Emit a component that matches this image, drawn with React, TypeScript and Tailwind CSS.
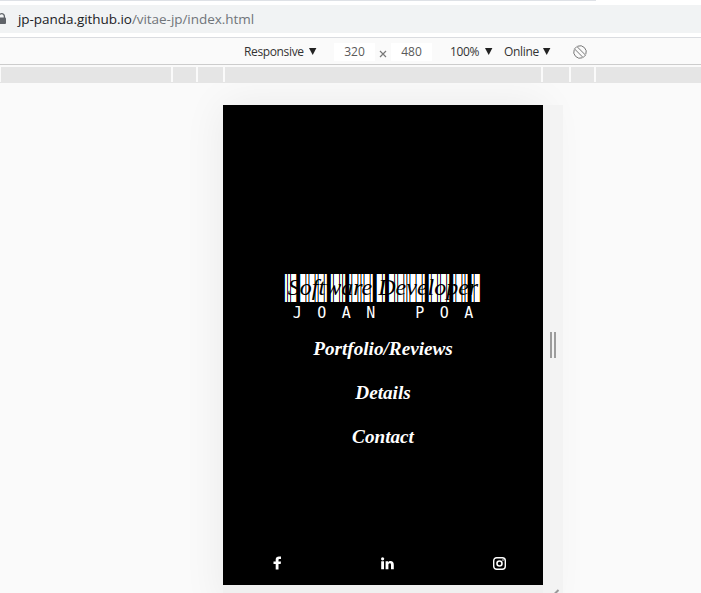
import React from "react";

const SEGMENTS = ["w-[170px]", "w-[23px]", "w-[25px]", "w-[316px]", "w-[26px]", "w-[23px]", "w-[110px]"];

// Code 39: nine alternating bars and spaces per character, n = narrow, w = wide.
const CODE39: Record<string, string> = {
  J: "nnnnwwwnn",
  O: "wnnnwnnwn",
  A: "wnnnnwnnw",
  N: "nnnnwnnww",
  P: "nnwnwnnwn",
  " ": "nwwnnnwnn",
};
const NAME = "JOAN POA";
const UNIT = 1.53;

function bars() {
  const out: { x: number; w: number }[] = [];
  let x = 0;
  for (const ch of NAME) {
    [...CODE39[ch]].forEach((c, i) => {
      const w = (c === "w" ? 3 : 1) * UNIT;
      if (i % 2 === 0) out.push({ x: x - 0.32, w: w + 0.64 });
      x += w;
    });
    x += UNIT;
  }
  return out;
}

function Barcode() {
  const list = bars();
  const layer = (fill: string, dx: number) => (
    <g fill={fill} transform={`translate(${dx} 0)`} className="mix-blend-screen">
      {list.map((b, i) => (
        <rect key={i} x={b.x} y="0" width={b.w} height="28" />
      ))}
    </g>
  );
  return (
    <svg className="block isolate" width="198" height="28" viewBox="-1.2 0 198 28">
      {layer("#ff0000", 0.4)}
      {layer("#00ff00", 0)}
      {layer("#0000ff", -0.4)}
    </svg>
  );
}

function Caret() {
  return (
    <svg width="8" height="7" viewBox="0 0 8 7" className="shrink-0">
      <path d="M0 0h7.400L3.700 7z" fill="#222" />
    </svg>
  );
}

export default function App() {
  return (
    <div className="flex h-[593px] w-[701px] flex-col overflow-hidden bg-white font-['Open_Sans','Noto_Sans',sans-serif]">
      <div className="h-px w-[596px] shrink-0 bg-[#dee1e6]" />
      <div className="mt-1 flex h-7 shrink-0 items-center bg-[#f1f3f4]">
        <svg width="7" height="12" viewBox="0 0 7 12" className="shrink-0">
          <path d="M-1 5V3.400a2.700 2.700 0 0 1 5.400 0V5" fill="none" stroke="#5f6368" strokeWidth="1.300" />
          <rect x="-3" y="4.500" width="9" height="6.500" rx="1" fill="#5f6368" />
        </svg>
        <span className="ml-[11px] whitespace-nowrap text-[13.5px] tracking-[-0.05px] text-[#202124]">
          jp-panda.github.io<span className="text-[#70757a]">/vitae-jp/index.html</span>
        </span>
      </div>
      <div className="mt-1 flex h-7 shrink-0 items-center border-y border-t-[#dadce0] border-b-[#ccc] bg-[#fafafa] pt-px text-[12px] text-[#333]">
        <span className="ml-[244px] w-[65px] whitespace-nowrap tracking-[-0.36px]">Responsive</span>
        <Caret />
        <span className="ml-[17px] flex h-[18px] w-[41px] items-center justify-center bg-white text-[#5a5a5a]">320</span>
        <svg width="8" height="8" viewBox="0 0 8 8" className="mt-1 ml-1 shrink-0">
          <path d="M1 1l6 6M7 1l-6 6" stroke="#777" strokeWidth="1.200" />
        </svg>
        <span className="ml-1 flex h-[18px] w-[41px] items-center justify-center bg-white text-[#5a5a5a]">480</span>
        <span className="ml-[18px] w-[35px] whitespace-nowrap tracking-[-0.4px]">100%</span>
        <Caret />
        <span className="ml-[11px] w-[39px] whitespace-nowrap tracking-[-0.3px]">Online</span>
        <Caret />
        <svg width="14" height="14" viewBox="0 0 14 14" className="ml-[22px] shrink-0" fill="none" stroke="#777">
          <path d="M4.600 1.200A6.300 6.300 0 0 1 12.800 9.400M9.400 12.800A6.300 6.300 0 0 1 1.200 4.600M3.900 1.500L12.500 10.100 10.100 12.500 1.500 3.900z" />
        </svg>
      </div>
      <div className="h-4.5 shrink-0 bg-[#fafafa] pt-0.5">
        <div className="h-4 bg-[#e5e5e5]">
          <div className="flex h-[15px] gap-0.5 border-l border-[#fafafa] bg-[#fafafa]">
            {SEGMENTS.map((w, i) => (
              <div key={i} className={`${w} shrink-0 bg-[#e5e5e5]`} />
            ))}
          </div>
        </div>
      </div>
      <div className="flex min-h-0 grow items-start overflow-hidden bg-[#fafafa] pt-[22px] pl-[223px]">
        <div className="shrink-0 shadow-[0_0_40px_rgba(0,0,0,0.07)]">
          <main className="flex h-[480px] w-[320px] flex-col items-center bg-black text-white">
            <div className="mt-[169px] grid justify-items-center">
              <div className="col-start-1 row-start-1">
                <Barcode />
              </div>
              <h1 className="z-10 col-start-1 row-start-1 h-7 whitespace-nowrap font-['Liberation_Serif',serif] text-[24px] leading-[26px] text-black italic">
                Software Developer
              </h1>
            </div>
            <div className="grid h-5 w-[196px] grid-cols-8 text-center font-['DejaVu_Sans_Mono',monospace] text-[15px] leading-[22px]">
              {[...NAME].map((c, i) => (
                <span key={i}>{c}</span>
              ))}
            </div>
            <nav className="mt-4 flex flex-col items-center gap-[22px] font-['Liberation_Serif',serif] text-[19.2px] leading-[22px] font-bold italic">
              <a>Portfolio/Reviews</a>
              <a>Details</a>
              <a>Contact</a>
            </nav>
            <footer className="mt-auto mb-[15px] flex h-[14px] w-full items-center pl-[50px]">
              <svg width="8" height="14" viewBox="0 0 8 14" fill="#fff">
                <path d="M8 .600V2.900H6.600C5.700 2.900 5.500 3.300 5.500 4V5.600H8L7.700 8H5.500v5.500H2.700V8H.500V5.600h2.200V3.600C2.700 1.600 4 .500 6 .500z" />
              </svg>
              <svg width="13" height="13" viewBox="0 0 13 13" fill="#fff" className="ml-[100px]">
                <path d="M.2 4.300H3v8H.200zM4.600 4.300h2.600v1.100C7.700 4.600 8.500 4.100 9.600 4.100c2 0 3.200 1.200 3.200 3.600v4.600H10V8c0-1.100-.4-1.700-1.200-1.700-1 0-1.400.7-1.400 1.700v4.300H4.600z" />
                <circle cx="1.600" cy="1.800" r="1.600" />
              </svg>
              <svg width="13" height="13" viewBox="0 0 13 13" fill="none" stroke="#fff" className="ml-[99px]">
                <rect x=".7" y=".7" width="11.600" height="11.600" rx="3" strokeWidth="1.400" />
                <circle cx="6.500" cy="6.500" r="2.500" strokeWidth="1.600" />
                <circle cx="10" cy="3" r=".8" fill="#fff" stroke="none" />
              </svg>
            </footer>
          </main>
          <div className="h-5 bg-[#f0f0f0]" />
        </div>
        <div className="z-10 flex shrink-0 flex-col">
          <div className="flex h-[480px] w-5 items-center justify-center gap-0.5 bg-[#f3f3f3]">
            <div className="h-[26px] w-0.5 bg-[#9c9c9c]" />
            <div className="h-[26px] w-0.5 bg-[#9c9c9c]" />
          </div>
          <div className="h-5 w-5 bg-[#f3f3f3] pt-1 pl-2.5">
            <svg width="8" height="12" viewBox="0 0 8 12">
              <path d="M0 6.500L5.500 1" stroke="#999" strokeWidth="2" />
            </svg>
          </div>
        </div>
      </div>
    </div>
  );
}
